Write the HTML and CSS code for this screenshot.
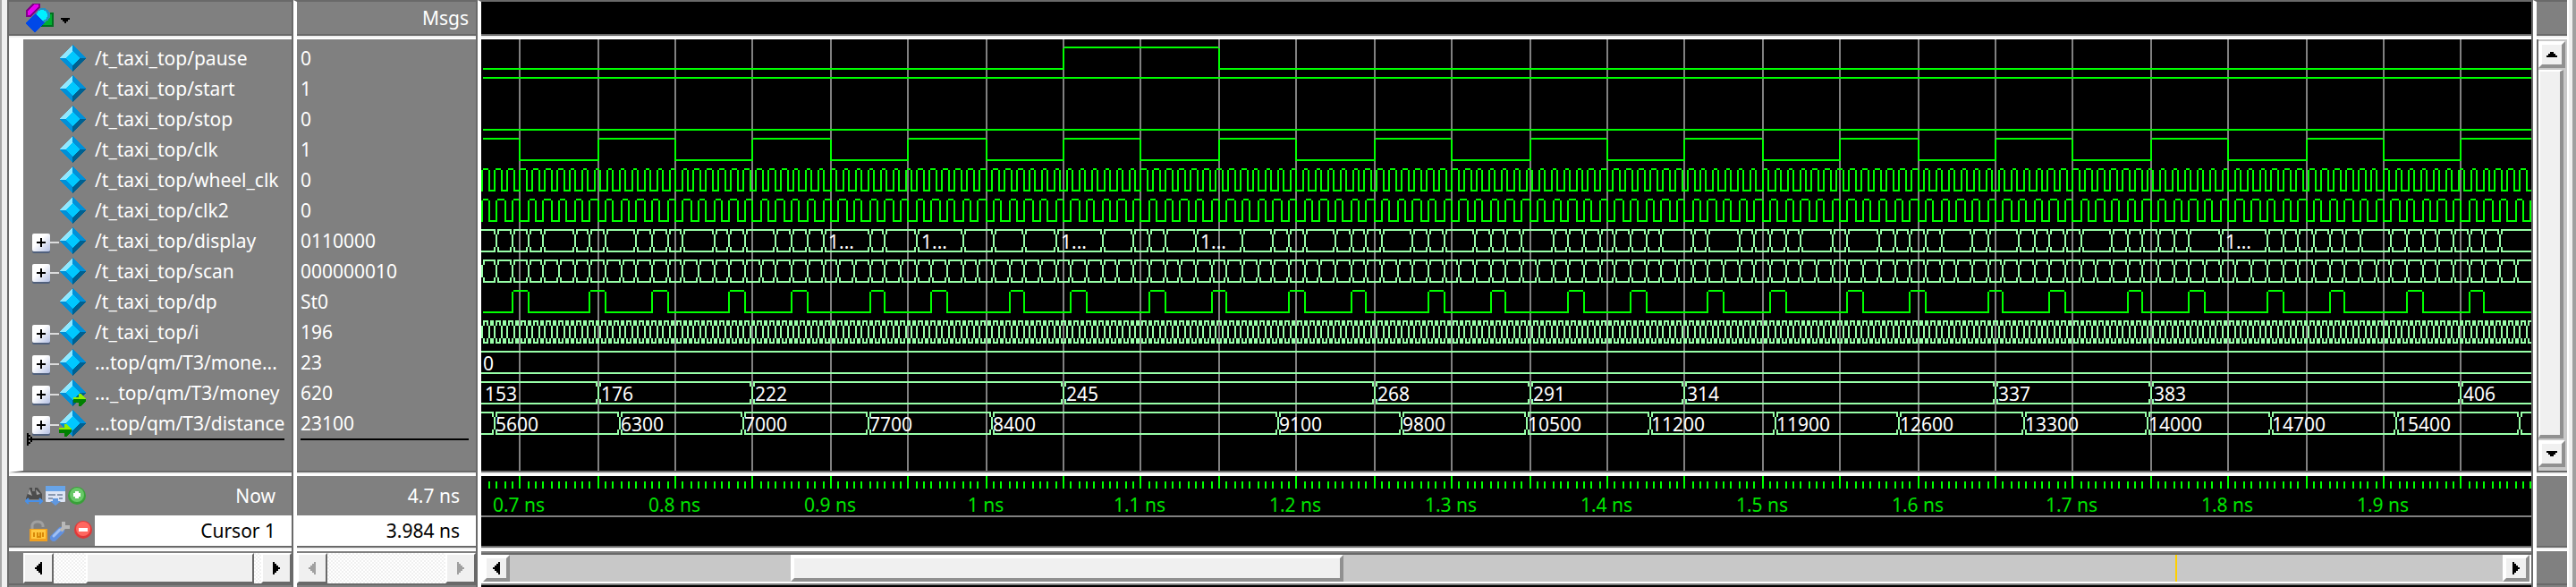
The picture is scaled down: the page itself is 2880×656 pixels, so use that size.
FILE: index.html
```html
<!DOCTYPE html>
<html lang="en">
<head>
<meta charset="utf-8">
<title>Wave</title>
<link rel="stylesheet" href="styles.css">
</head>
<body>
<svg class="defs" aria-hidden="true">
  <symbol id="gem" viewBox="0 0 15 15" shape-rendering="crispEdges">
    <path d="M7.5 0L15 7.5 7.5 15 0 7.5z" fill="#0090d8"/>
    <path d="M7.5 0L0 7.5H4L7.5 4z" fill="#90e8ff"/>
    <path d="M7.5 15L15 7.5H11L7.5 11z" fill="#006090"/>
    <path d="M7.5 3.5L11.5 7.5 7.5 11.500 3.500 7.500z" fill="#00c8ff"/>
  </symbol>
  <symbol id="arrow" viewBox="0 0 7 7" shape-rendering="crispEdges">
    <path d="M0 2h3V0h1l3 3v1L4 7H3V5H0z" fill="#008000"/>
    <path d="M0 2h3V0h1l3 3H0z" fill="#90f000"/>
  </symbol>
  <symbol id="left" viewBox="0 0 8 14"><path d="M8 0v14L6 14V12H4V10H2V8H0V6H2V4H4V2H6V0z"/></symbol>
  <symbol id="right" viewBox="0 0 8 14"><path d="M0 0v14h2V12h2V10h2V8h2V6H6V4H4V2H2V0z"/></symbol>
  <symbol id="up" viewBox="0 0 12 6"><path d="M0 6V4H2V2H4V0H8V2h2V4h2V6z"/></symbol>
  <symbol id="down" viewBox="0 0 12 6"><path d="M0 0V2H2V4H4V6H8V4h2V2h2V0z"/></symbol>
</svg>

<main class="window">
  <section class="column names">
    <header class="head">
      <button class="tool" aria-label="Object types">
        <svg width="52" height="32" viewBox="0 0 26 16" shape-rendering="crispEdges">
          <path d="M1 7V4L5 0H8V2L3 7z" fill="#e800f0" stroke="#800088" stroke-width="1"/>
          <rect x="8.500" y="5.500" width="7" height="7" fill="#00b030" stroke="#007020"/>
          <circle cx="10" cy="6.500" r="4" fill="#2890c0"/>
          <circle cx="9.500" cy="6.500" r="3" fill="#00f0ff"/>
          <path d="M5.500 5.500L11 11 5.500 16 0 11z" fill="#0048e8"/>
          <path d="M20 8h5v1h-1v1h-1v1h-1v-1h-1v-1h-1z" fill="#000"/>
        </svg>
      </button>
    </header>
    <div class="body">
      <ul class="signals" id="names"></ul>
      <div class="insert"><svg width="6" height="14" viewBox="0 0 3 7" shape-rendering="crispEdges"><path d="M0 0h1v1h1v1h1v3h-1v1h-1v1h-1zM1 2v3h1v-3z" fill-rule="evenodd"/></svg></div>
    </div>
    <div class="cursors">
      <div class="now">
        <span class="icons">
          <button class="tool" aria-label="Search cursors"><svg width="20" height="22" viewBox="0 0 20 22"><path d="M1 14L3 8 5 2H8V6H11V2H14L19 9V15H1z" fill="#4c4c4c"/><path d="M5 3l-2 6 5 2zM12 4l1 6 4-1z" fill="#a0a0a0"/><path d="M1 17h18M4 14l-3 3 3 3M16 14l3 3-3 3" fill="none" stroke="#4890e8" stroke-width="2"/></svg></button>
          <button class="tool" aria-label="Cursor properties"><svg width="22" height="22" viewBox="0 0 22 22"><rect width="22" height="18" rx="1" fill="#dce4f4"/><rect width="22" height="6" fill="#68a4e8"/><path d="M3 10h8M3 14h5M13 10h6M15 14h4" stroke="#8898b0" stroke-width="2"/><path d="M8 14h6v3h3l-6 5-6-5h3z" fill="#6098e0"/></svg></button>
          <button class="tool" aria-label="Add cursor"><svg width="20" height="22" viewBox="0 0 20 22"><circle cx="10" cy="11" r="10" fill="#38a038"/><circle cx="10" cy="10" r="8" fill="#68c868"/><path d="M10 6v8M6 10h8" stroke="#fff" stroke-width="4"/></svg></button>
        </span>
        <span>Now</span>
      </div>
      <div class="cursor">
        <span class="icons">
          <button class="tool" aria-label="Lock cursor"><svg width="20" height="24" viewBox="0 0 20 24"><path d="M3 10V6Q4 2 9 2T15 6V8" fill="none" stroke="#a0a0a0" stroke-width="3"/><rect y="10" width="20" height="14" fill="#f0a020"/><rect x="2" y="11" width="16" height="10" fill="#ffc840"/><path d="M5 14v5M9 14v5h3v-5M15 14v5" stroke="#d88808" stroke-width="2" fill="none"/></svg></button>
          <button class="tool" aria-label="Edit cursor"><svg width="24" height="24" viewBox="0 0 24 24"><path d="M4 20L12 12" stroke="#6090e0" stroke-width="8" stroke-linecap="round"/><path d="M4 18L11 11" stroke="#a0c0f4" stroke-width="3" stroke-linecap="round"/><path d="M12 12l5-5M15 2v6h7" stroke="#b8b8b8" stroke-width="4" fill="none"/></svg></button>
          <button class="tool" aria-label="Delete cursor"><svg width="20" height="24" viewBox="0 0 20 24"><circle cx="10" cy="11" r="10" fill="#e03838"/><circle cx="10" cy="10" r="8" fill="#ff6860"/><path d="M5 11h10" stroke="#fff" stroke-width="4"/></svg></button>
        </span>
        <span class="field">Cursor 1</span>
      </div>
    </div>
    <div class="bar checker">
      <button class="btn" aria-label="Scroll names left"><svg width="8" height="14"><use href="#left"/></svg></button>
      <div class="track"><div class="thumb"></div></div>
      <button class="btn" aria-label="Scroll names right"><svg width="8" height="14"><use href="#right"/></svg></button>
    </div>
  </section>

  <section class="column values">
    <header class="head">Msgs</header>
    <div class="body">
      <ul class="signals" id="values"></ul>
      <div class="insert"></div>
    </div>
    <div class="cursors">
      <div class="now">4.7 ns</div>
      <div class="cursor"><span class="field">3.984 ns</span></div>
    </div>
    <div class="bar checker disabled">
      <button class="btn" disabled aria-label="Scroll values left"><svg width="8" height="14"><use href="#left"/></svg></button>
      <div class="track"></div>
      <button class="btn" disabled aria-label="Scroll values right"><svg width="8" height="14"><use href="#right"/></svg></button>
    </div>
  </section>

  <section class="column waves">
    <header class="head"></header>
    <div class="body" id="waves"></div>
    <div class="cursors">
      <div class="now" id="ruler"></div>
      <div class="cursor"></div>
    </div>
    <div class="bar solid">
      <button class="btn" aria-label="Scroll waves left"><svg width="8" height="14"><use href="#left"/></svg></button>
      <div class="track"><div class="before"></div><div class="thumb"></div><div class="gap"></div><div class="mark"></div><div class="after"></div></div>
      <button class="btn" aria-label="Scroll waves right"><svg width="8" height="14"><use href="#right"/></svg></button>
    </div>
  </section>

  <section class="column side">
    <div class="head"></div>
    <div class="body">
      <button class="btn" aria-label="Scroll up"><svg width="12" height="6"><use href="#up"/></svg></button>
      <div class="vthumb"></div>
      <button class="btn" aria-label="Scroll down"><svg width="12" height="6"><use href="#down"/></svg></button>
    </div>
    <div class="cursors"></div>
    <div class="bar"></div>
  </section>
</main>
<script src="wave.js"></script>
</body>
</html>
```
FILE: styles.css
```css
* {
  box-sizing: border-box;
}

body {
  margin: 0;
  background: #f0f0f0;
  color: #fff;
  font: 21px/34px "Noto Sans", "Open Sans", sans-serif;
}

button {
  display: flex;
  align-items: center;
  justify-content: center;
  margin: 0;
  padding: 0;
  border: 0;
  background: none;
}

svg {
  display: block;
}

.defs {
  position: absolute;
  width: 0;
  height: 0;
}

.window {
  display: flex;
  min-height: 100vh;
  padding-left: 2px;
  border-left: 2px solid #a8a8a8;
  border-right: 4px solid #a0a0a0;
  background: #f0f0f0;
}

.column {
  display: flex;
  flex-direction: column;
  flex: none;
  min-width: 0;
  background: #808080;
  border-top: 2px solid #696969;
  border-right: 2px solid #696969;
}

.head,
.body,
.cursors {
  border-bottom: 2px solid #696969;
  box-shadow: 0 2px #f0f0f0, 0 4px #fff;
  margin-bottom: 4px;
}

.head {
  display: flex;
  align-items: center;
  height: 38px;
}

.body {
  flex: 1;
  padding-top: 4px;
}

.names {
  width: 320px;
  margin-left: 4px;
  border-left: 2px solid #696969;
}

.names .head {
  padding-left: 18px;
}

.names .body {
  border-left: 16px solid #fff;
}

.values {
  width: 206px;
  border-left: 4px solid #fff;
}

.values .head,
.values .now {
  justify-content: flex-end;
}

.values .head {
  padding-right: 8px;
}

.signals {
  margin: 0;
  padding: 0;
  list-style: none;
}

.signals li {
  display: flex;
  align-items: center;
  height: 34px;
  white-space: pre;
}

.values .signals li {
  padding-left: 4px;
}

.slot {
  display: flex;
  align-items: center;
  width: 40px;
  height: 34px;
  padding: 4px 0 0 10px;
}

.slot::after {
  content: "";
  flex: 1;
  height: 2px;
  background: #dcdcdc;
}

.slot.leaf::after {
  display: none;
}

.plus {
  width: 20px;
  height: 20px;
  border-radius: 2px;
  background: linear-gradient(135deg, #fff 40%, #b4c0e4);
  box-shadow: 0 2px #50607c;
}

.gem {
  position: relative;
  width: 30px;
  height: 30px;
  margin-right: 10px;
}

.badge {
  position: absolute;
  right: 0;
  bottom: 0;
}

.badge.in {
  right: auto;
  left: 0;
}

.insert {
  display: flex;
  align-items: center;
  height: 2px;
  margin: 0 8px 0 4px;
  background: #000;
}

.cursors {
  flex: none;
  height: 80px;
}

.now,
.cursor {
  display: flex;
  align-items: center;
  justify-content: space-between;
}

.now {
  height: 44px;
  padding: 0 18px;
}

.cursor {
  height: 34px;
}

.icons {
  display: flex;
  gap: 3px;
}

.cursor .icons {
  width: 96px;
  padding-left: 23px;
}

.field {
  flex: 1;
  padding-right: 18px;
  background: #fff;
  color: #000;
  text-align: right;
}

.bar {
  display: flex;
  flex: none;
  height: 38px;
  padding-top: 2px;
  border-bottom: 2px solid #696969;
  margin-bottom: 2px;
}

.names .bar {
  padding-left: 16px;
}

.btn {
  flex: none;
  width: 34px;
  border: 2px solid #fff;
  border-right-color: #696969;
  border-bottom-color: #696969;
  background: #f0f0f0;
  fill: #000;
}

.disabled .btn {
  fill: #a0a0a0;
}

.track {
  display: flex;
  flex: 1;
}

.checker .track {
  background: repeating-conic-gradient(#fff 0 25%, #f0f0f0 0 50%) 0 0 / 4px 4px;
}

.names .thumb {
  flex: 1;
  margin: 0 8px 0 36px;
  border: 2px solid #fff;
  border-right-color: #696969;
  border-bottom-color: #696969;
  background: #f0f0f0;
}

.waves {
  flex: 1;
  border-left: 4px solid #fff;
  background: #000;
}

.waves .body {
  padding: 0;
}

.waves .now {
  display: block;
  padding: 0;
}

.waves .now svg {
  overflow: visible;
}

.waves .cursor {
  border-top: 2px solid #808080;
}

.solid {
  border-top: 2px solid #808080;
  border-bottom-color: #808080;
  padding: 0 2px;
  background: #fff;
  box-shadow: inset 0 2px #696969;
}

.solid .btn {
  width: 30px;
  height: 30px;
}

.solid .btn,
.solid .thumb,
.side .btn {
  margin-top: 2px;
  border: 4px solid #fff;
  border-right-color: #909090;
  border-bottom-color: #909090;
  background: #f0f0f0;
}

.solid .track {
  margin: 2px 0;
  background: #c8c8c8;
}

.solid .thumb {
  margin: 0;
  flex: 610;
}

.before {
  flex: 314;
}

.gap {
  flex: 930;
}

.mark {
  width: 2px;
  background: #ffd000;
}

.after {
  flex: 364;
}

.side {
  width: 38px;
  margin-right: 6px;
  border-left: 4px solid #fff;
  border-right: 0;
  box-shadow: 2px 0 #fff;
}

.side .body {
  display: flex;
  flex-direction: column;
  padding: 2px 2px 4px 0;
  border-left: 2px solid #696969;
  background: #c8c8c8;
}

.side .btn {
  width: 30px;
  height: 30px;
  margin: 0;
}

.vthumb {
  flex: 1;
  margin: 2px 2px 2px 0;
  border: 2px solid #fff;
  border-right: 4px solid #909090;
  border-bottom: 4px solid #909090;
  background: #f0f0f0;
}

.grid {
  fill: #808080;
}

.bit {
  fill: #00ff00;
}

.bus {
  fill: #98ffa8;
}

.label {
  fill: #fff;
}

.time {
  fill: #00e400;
  text-anchor: middle;
}
```
FILE: wave.js
```js
const ROW = 34;
const signals = [
  { name: "/t_taxi_top/pause", value: "0" },
  { name: "/t_taxi_top/start", value: "1" },
  { name: "/t_taxi_top/stop", value: "0" },
  { name: "/t_taxi_top/clk", value: "1" },
  { name: "/t_taxi_top/wheel_clk", value: "0" },
  { name: "/t_taxi_top/clk2", value: "0" },
  { name: "/t_taxi_top/display", value: "0110000", bus: true },
  { name: "/t_taxi_top/scan", value: "000000010", bus: true },
  { name: "/t_taxi_top/dp", value: "St0" },
  { name: "/t_taxi_top/i", value: "196", bus: true },
  { name: "...top/qm/T3/mone...", value: "23", bus: true },
  { name: "..._top/qm/T3/money", value: "620", bus: true, badge: "out" },
  { name: "...top/qm/T3/distance", value: "23100", bus: true, badge: "in" }
];

const badge = s => s.badge
  ? `<svg class="badge ${s.badge}" width="14" height="14"><use href="#arrow"/></svg>` : "";

document.getElementById("names").innerHTML = signals.map(s => `<li>
<span class="slot${s.bus ? "" : " leaf"}">${s.bus
  ? `<button class="plus" aria-label="Expand ${s.name}"><svg width="10" height="10"><path d="M4 0h2v4h4v2H6v4H4V6H0V4h4z"/></svg></button>` : ""}</span><span class="gem"><svg width="30" height="30"><use href="#gem"/></svg>${badge(s)}</span>${s.name}</li>`.replace(/>\n</g, "><")).join("");
document.getElementById("values").innerHTML = signals.map(s => `<li>${s.value}</li>`).join("");

// Times are in picoseconds; every drawn edge is two pixels wide.
const waves = document.getElementById("waves");
const width = waves.clientWidth;
const X = t => 2 * (Math.floor(290.74 + 0.8681 * (t - 700)) - 269);
const range = (from, to, step) => {
  const out = [];
  for (let t = from; t <= to; t += step) out.push(t);
  return out;
};
const END = 700 + (width / 2 - 21) / 0.8681;
const rect = (x, y, w, h) => w > 0 ? `M${x} ${y}h${w}v${h}h${-w}z` : "";

function bit(row, level, edges) {
  const top = 8 + row * ROW;
  let x = 2;
  let d = "";
  for (const t of edges) {
    const e = X(t);
    if (e >= width) break;
    if (e >= 0) {
      d += rect(x, level ? top : top + 24, e - x, 2) + rect(e, top + 2, 2, 24);
      x = e + (level ? 0 : 2);
    }
    level = !level;
  }
  d += rect(x, level ? top : top + 24, width - x, 2);
  return `<path class="bit" d="${d}"/>`;
}

function bus(row, edges) {
  const top = 8 + row * ROW;
  let x = 0;
  let d = "";
  for (const t of edges) {
    const e = X(t);
    if (e >= width) break;
    d += rect(x, top, e - x, 2) + rect(x, top + 24, e - x, 2);
    if (e > 0) d += rect(e - 2, top + 2, 2, 4) + rect(e - 2, top + 20, 2, 4);
    d += rect(e, top + 6, 2, 14) + rect(e + 2, top + 2, 2, 4) + rect(e + 2, top + 20, 2, 4);
    x = e + 2;
  }
  d += rect(x, top, width - x, 2) + rect(x, top + 24, width - x, 2);
  return `<path class="bus" d="${d}"/>`;
}

const label = (row, x, text) => `<text class="label" x="${x}" y="${30 + row * ROW}">${text}</text>`;

const gridTimes = range(700, END, 50);
const dp = [];
for (let t = 695; t < END; t += 90) dp.push(t, t + 10, t + 50, t + 60);

const display = [685, 695, 705, 715, 735, 745, 755, 775, 785, 795, 805, 825, 835, 845, 865,
  875, 885, 895, 925, 935, 955, 985, 1005, 1025, 1045, 1075, 1095, 1105, 1115, 1135, 1165,
  1185, 1195, 1205, 1225, 1235, 1245, 1255, 1275, 1285, 1295, 1315, 1325, 1335, 1345, 1365,
  1375, 1385, 1395, 1405, 1415, 1425, 1435, 1455, 1465, 1485, 1495, 1505, 1515, 1525, 1545,
  1555, 1575, 1585, 1595, 1605, 1615, 1635, 1645, 1665, 1675, 1685, 1695, 1705, 1725, 1735,
  1745, 1755, 1765, 1775, 1795, 1825, 1835, 1845, 1855, 1865, 1875, 1885, 1905, 1915, 1925,
  1935, 1945, 1955, 1965, 1975];
const money = [[750, 176], [850, 222], [1050, 245], [1250, 268], [1350, 291], [1450, 314],
  [1650, 337], [1750, 383], [1950, 406]];
const distance = [[684, 5600], [764, 6300], [844, 7000], [924, 7700], [1004, 8400],
  [1188, 9100], [1268, 9800], [1348, 10500], [1428, 11200], [1508, 11900], [1588, 12600],
  [1668, 13300], [1748, 14000], [1828, 14700], [1908, 15400], [1988, ""]];

const height = 482;
waves.innerHTML = `<svg width="${width}" height="${height}">
<path class="grid" d="${gridTimes.map(t => rect(X(t), 0, 2, height)).join("")}"/>
${bit(0, false, [1050, 1150])}
${bit(1, true, [])}
${bit(2, false, [])}
${bit(3, true, gridTimes)}
${bit(4, false, range(676, END, 4))}
${bit(5, false, range(675, END, 5))}
${bus(6, display)}
${bus(7, range(675, 1985, 10))}
${bit(8, false, dp)}
${bus(9, range(676, END, 4))}
${bus(10, [])}
${bus(11, money.map(m => m[0]))}
${bus(12, distance.map(m => m[0]))}
${[895, 955, 1045, 1135, 1795].map(t => label(6, X(t) + 6, "1...")).join("")}
${label(10, 2, "0")}${label(11, 4, "153")}
${money.map(m => label(11, X(m[0]) + 4, m[1])).join("")}
${distance.filter(m => m[1]).map(m => label(12, X(m[0]) + 2, m[1])).join("")}
</svg>`;

const ticks = range(680, END, 5).map(t =>
  t % 50 ? rect(X(t), 6, 2, 8) : rect(X(t), 0, 2, 14)).join("");
const times = range(700, END, 100).map(t =>
  `<text class="time" x="${X(t)}" y="40">${t / 1000} ns</text>`).join("");
document.getElementById("ruler").innerHTML =
  `<svg width="${width}" height="44"><path class="bit" d="${ticks}"/>${times}</svg>`;
```
